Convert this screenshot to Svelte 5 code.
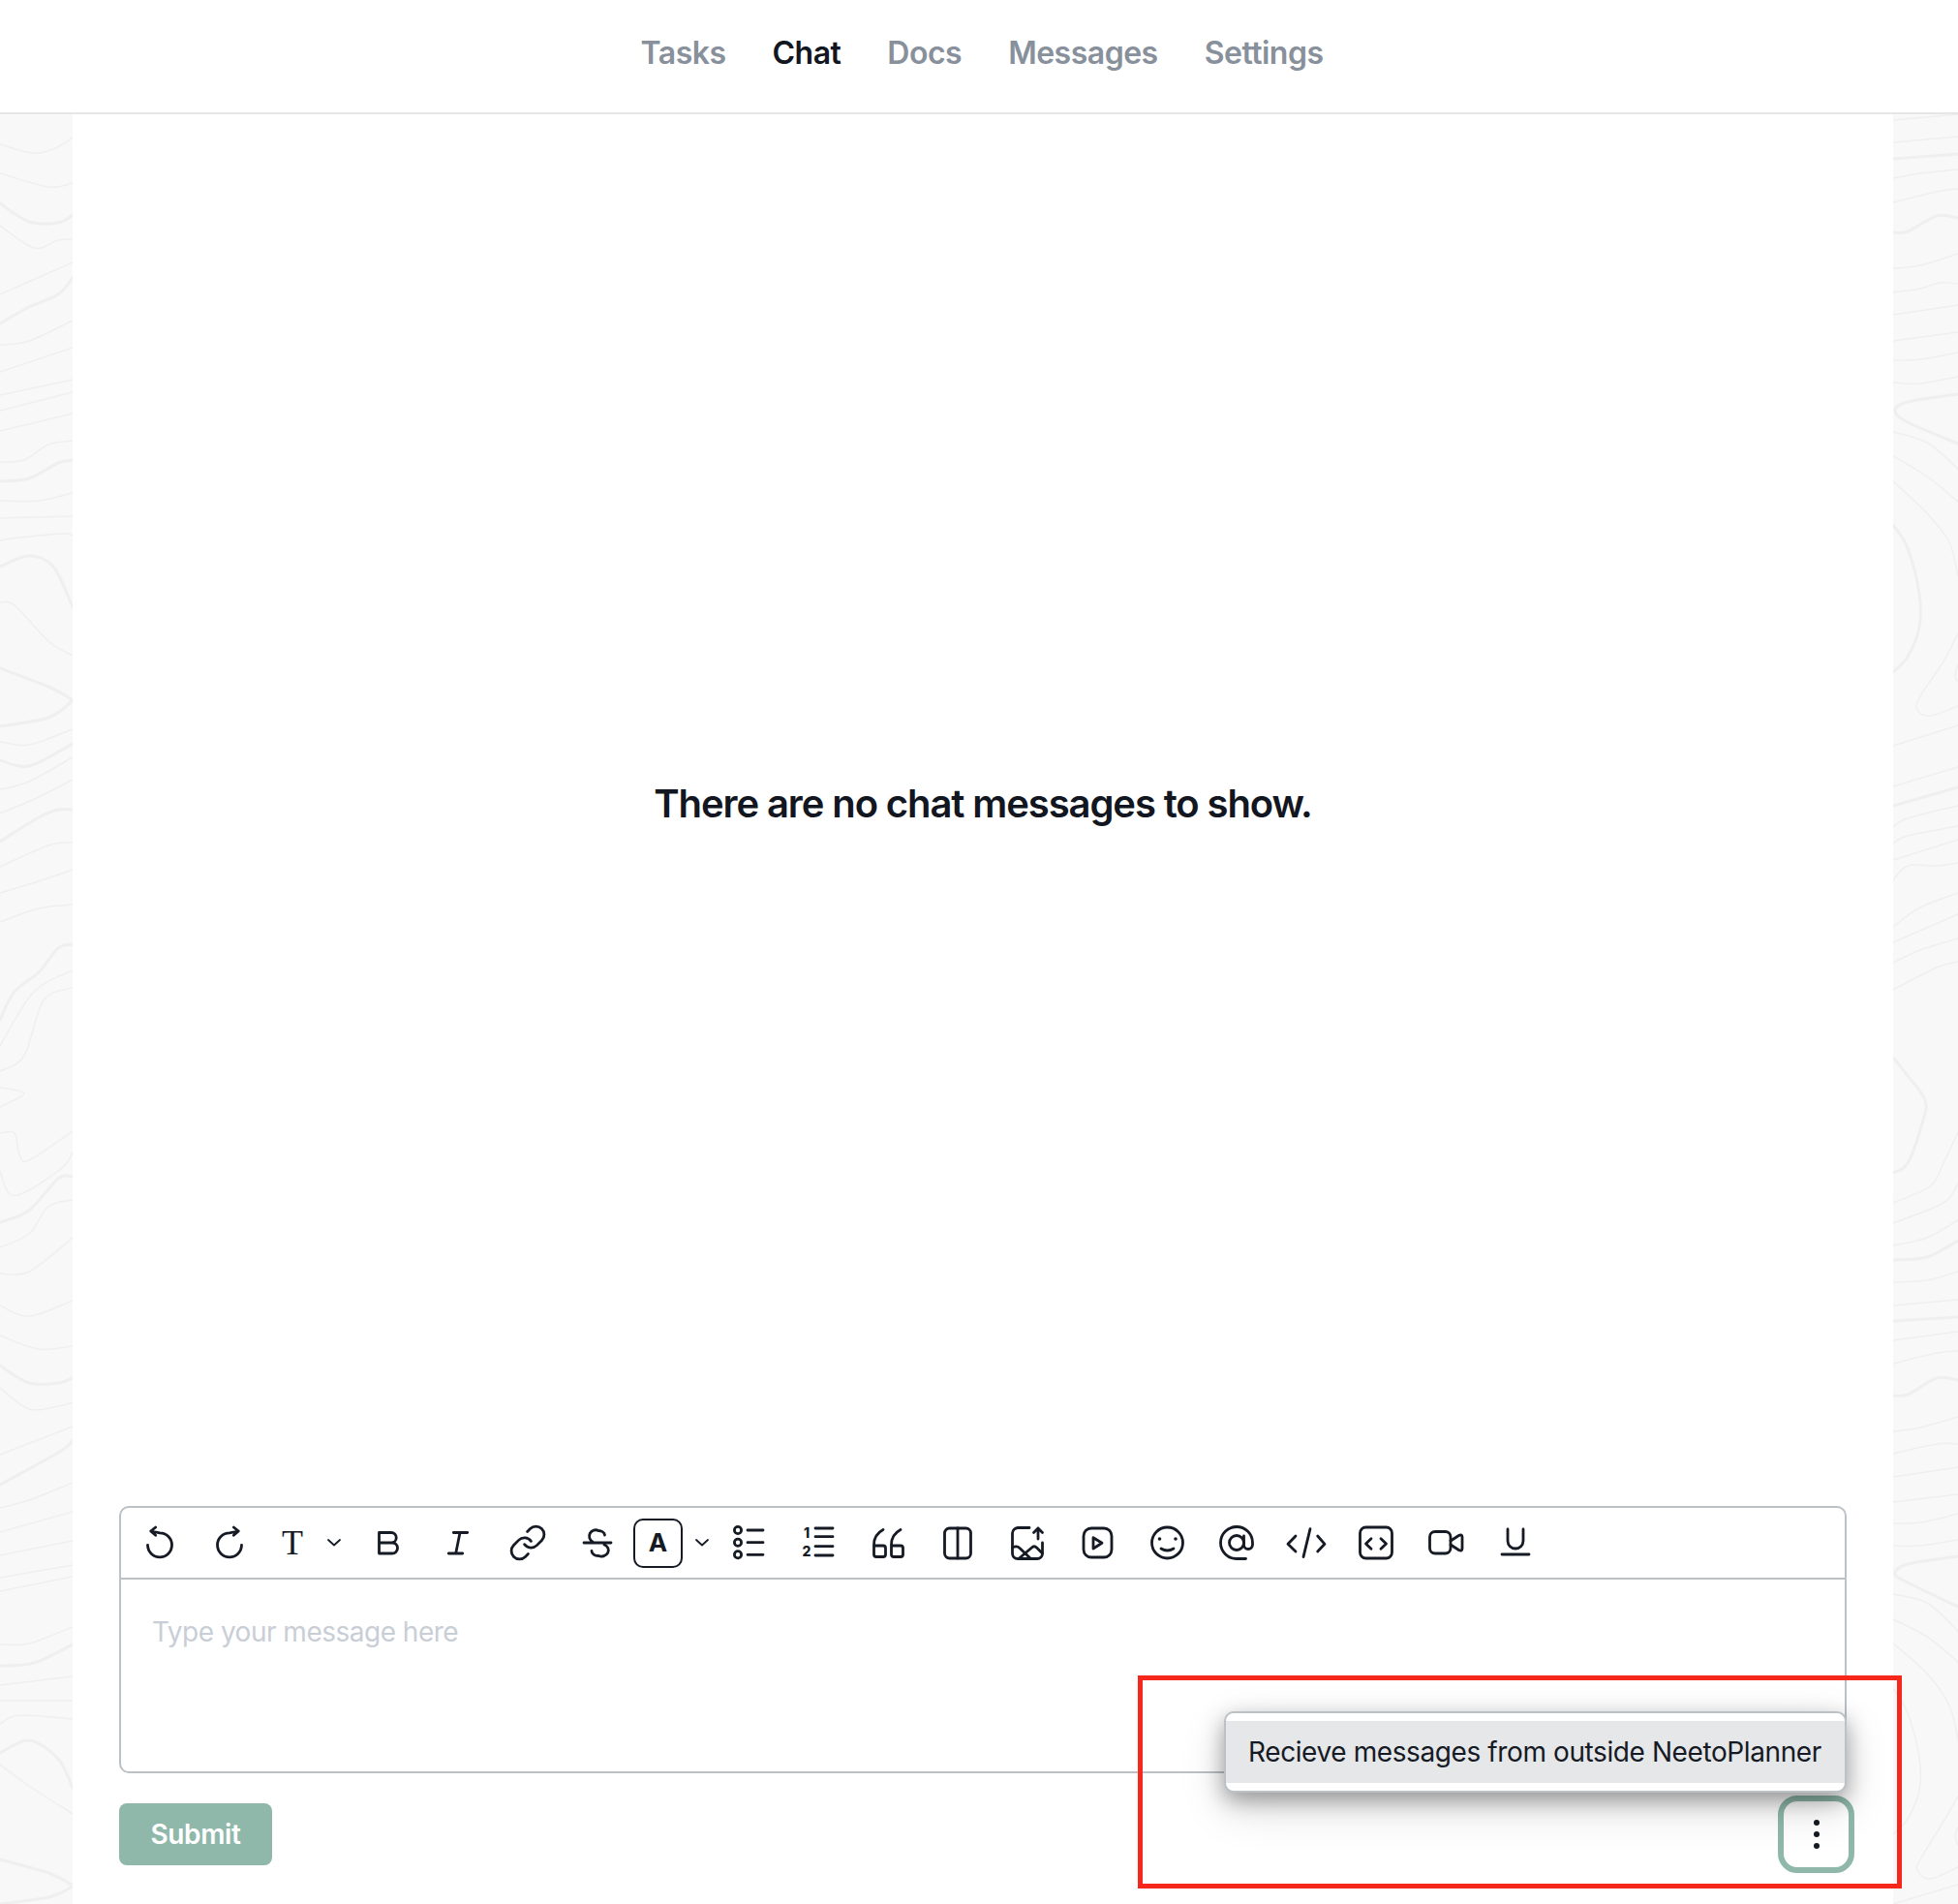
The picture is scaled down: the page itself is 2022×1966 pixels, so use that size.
<script lang="ts">
  const tabs = ['Tasks', 'Chat', 'Docs', 'Messages', 'Settings'];

  // contour lines of the page background, [points, thick]
  const leftLines: [string, boolean?][] = [
    ['0,149 33,158 55,154 75,142'], ['0,179 50,193 75,189'], ['0,210 30,229 60,230 75,222', true],
    ['0,233 35,256 60,248 75,247'], ['0,304 75,271'], ['0,334 30,317 60,304 75,287', true],
    ['0,356 30,352 75,331'], ['0,384 75,359'], ['0,408 75,392'], ['0,424 75,405'], ['0,445 75,427'],
    ['0,477 25,475 50,459 75,455'], ['0,497 30,494 60,478 75,475', true], ['0,517 40,517 75,509'],
    ['0,535 75,533'], ['0,558 20,555 65,551 75,553'], ['0,585 30,574 55,585 75,627', true],
    ['0,622 15,625 50,662 75,677'], ['0,690 50,709 72,721 73,725 50,741 0,750', true],
    ['0,766 30,769 75,753'], ['0,785 30,791 75,768', true], ['0,815 30,807 75,782'],
    ['0,840 40,823 75,805'], ['0,869 40,844 60,836 75,836', true], ['0,895 50,873 75,870'],
    ['0,922 40,910 75,898'], ['0,952 40,938 75,934'], ['0,1053 15,1024 40,1004 60,979 75,975', true],
    ['0,1080 35,1024 75,1002'], ['0,1106 25,1090 45,1033 75,1020'], ['0,1123 25,1129 0,1143'],
    ['0,1170 15,1170 20,1192 30,1198 75,1168'], ['0,1209 10,1233 30,1229 65,1205 75,1190'],
    ['0,1262 30,1250 60,1217 75,1215', true], ['0,1288 30,1274 50,1246 75,1239'],
    ['0,1315 30,1313 75,1278'], ['0,1348 30,1359 75,1343'], ['0,1379 40,1393 75,1390'],
    ['0,1410 30,1428 60,1428 75,1423', true], ['0,1433 30,1455 60,1452 75,1448'], ['0,1502 75,1473'],
    ['0,1533 60,1500 75,1488', true], ['0,1557 30,1549 75,1531'], ['0,1582 75,1561'], ['0,1606 75,1591'],
    ['0,1629 75,1616'], ['0,1643 75,1628'], ['0,1698 30,1697 75,1680'], ['0,1720 35,1717 75,1698', true],
    ['0,1740 75,1731'], ['0,1756 75,1756'], ['0,1780 20,1771 75,1775'],
    ['0,1810 30,1797 60,1816 75,1846', true], ['0,1822 30,1844 75,1873'],
    ['0,1920 50,1934 72,1945 73,1949 50,1959 0,1966', true]
  ];

  const rightLines: [string, boolean?][] = [
    ['0,124 67,118'], ['0,147 67,141'], ['0,164 67,159', true], ['0,184 28,179 67,175'],
    ['0,209 45,198 67,195'], ['0,240 15,239 45,223 67,225', true], ['0,277 28,274 67,262'],
    ['0,302 28,298 48,292 67,293'], ['0,325 67,315'], ['0,352 67,343'], ['0,372 28,371 67,364'],
    ['0,395 28,396 67,389'], ['67,407 15,415 2,424 15,436 67,458', true], ['0,446 35,457 67,484'],
    ['0,471 35,492 67,518'], ['0,497 35,530 58,560 67,595'], ['0,542 15,566 27,613 27,648 15,678 0,694', true],
    ['67,654 52,683 28,719 25,733 38,739 67,729'], ['67,686 64,698 67,704'], ['0,770 67,749'],
    ['0,812 67,792'], ['0,832 67,813', true], ['0,854 15,845 67,832'], ['0,871 15,863 67,853'],
    ['0,888 67,867'], ['0,909 15,894 45,894 67,891'], ['0,957 28,937 67,922'], ['0,973 67,944'],
    ['0,994 28,981 67,969'], ['0,1022 45,999 67,993'],
    ['0,1092 12,1107 33,1136 30,1160 15,1201 0,1211', true], ['67,1169 52,1201 38,1225 0,1242'],
    ['67,1222 52,1242 0,1263'], ['67,1260 35,1278 0,1286'], ['67,1281 35,1298 0,1301', true],
    ['67,1313 35,1322 0,1324'], ['0,1348 67,1342'], ['0,1364 67,1360', true], ['0,1384 67,1375'],
    ['0,1408 45,1397 67,1395'], ['0,1441 15,1440 45,1423 67,1425', true], ['0,1478 28,1474 67,1463'],
    ['0,1501 45,1491 67,1491'], ['0,1525 67,1515'], ['0,1551 67,1543'], ['0,1573 28,1572 67,1563'],
    ['0,1596 28,1596 67,1590'], ['67,1607 15,1615 2,1625 15,1634 67,1659', true],
    ['0,1646 35,1655 67,1684'], ['0,1672 35,1690 67,1716'], ['0,1697 35,1728 58,1761 67,1796'],
    ['0,1743 15,1769 27,1814 27,1849 15,1878 0,1894'], ['67,1855 52,1881 28,1920 25,1931 38,1940 67,1928'],
    ['67,1887 64,1896 67,1905'], ['0,1966 67,1946']
  ];

  // smooth line through the points
  function contour(points: string) {
    const p = points.split(' ').map((s) => s.split(',').map(Number));
    let d = `M${p[0][0]} ${p[0][1]}`;
    for (let i = 0; i < p.length - 1; i++) {
      const a = p[i - 1] ?? p[i];
      const b = p[i];
      const c = p[i + 1];
      const e = p[i + 2] ?? c;
      const c1 = [b[0] + (c[0] - a[0]) / 6, b[1] + (c[1] - a[1]) / 6];
      const c2 = [c[0] - (e[0] - b[0]) / 6, c[1] - (e[1] - b[1]) / 6];
      d += `C${c1[0]} ${c1[1]} ${c2[0]} ${c2[1]} ${c[0]} ${c[1]}`;
    }
    return d;
  }
</script>

{#snippet sideLines(lines: [string, boolean?][], width: number)}
  <svg class="side" style="width:{width}px" viewBox="0 118 {width} 1848" fill="none">
    {#each lines as [points, thick]}
      <path d={contour(points)} stroke-width={thick ? 3 : 1.5} />
    {/each}
  </svg>
{/snippet}

{#snippet caret()}
  <svg class="caret" width="14" height="8" viewBox="0 0 14 8" fill="none">
    <path d="M1 1l6 5.5L13 1" />
  </svg>
{/snippet}

<div class="root">
  <header class="topbar">
    <nav class="tabs">
      {#each tabs as tab}
        <span class="tab" class:active={tab === 'Chat'}>{tab}</span>
      {/each}
    </nav>
  </header>

  <div class="page">
    {@render sideLines(leftLines, 75)}

    <main class="main">
      <div class="empty">There are no chat messages to show.</div>

      <div class="composer">
        <div class="editor">
          <div class="toolbar">
            <button class="tb" title="Undo">
              <svg class="ic" viewBox="0 0 40 40"><path d="M15.7 4l-5 4 5 4.300M10.700 8L20 9.800A12.500 12.500 0 1 1 7.500 22.300" /></svg>
            </button>
            <button class="tb" title="Redo">
              <svg class="ic" viewBox="0 0 40 40"><path d="M24.300 4l5 4-5 4.300M29.300 8L20 9.800A12.500 12.500 0 1 0 32.500 22.300" /></svg>
            </button>
            <button class="tb group-t" title="Text size">
              <span class="serif-t">T</span>
              {@render caret()}
            </button>
            <button class="tb" title="Bold">
              <svg class="ic" viewBox="0 0 40 40"><path d="M11.500 9.500V31H25A5.500 5.500 0 0 0 25 20H11.500M11.500 9.500H24A5.250 5.250 0 0 1 24 20" /></svg>
            </button>
            <button class="tb" title="Italic">
              <svg class="ic" viewBox="0 0 40 40"><path d="M16.300 9.500H30.700M11.300 31H25.700M23 9.500L18.700 31" /></svg>
            </button>
            <button class="tb" title="Link">
              <svg class="ic" viewBox="0 0 40 40">
                <g transform="translate(0.600 -0.400) scale(1.700)" stroke-width="1.650">
                  <path d="M10 13a5 5 0 0 0 7.540.540l3-3a5 5 0 0 0-7.070-7.070l-1.720 1.710" />
                  <path d="M14 11a5 5 0 0 0-7.540-.540l-3 3a5 5 0 0 0 7.070 7.070l1.710-1.710" />
                </g>
              </svg>
            </button>
            <button class="tb" title="Strike">
              <svg class="ic" viewBox="0 0 40 40"><path d="M7 20H35M28.500 12A6.500 5 0 0 0 22 7.500A6 6 0 0 0 16 19M28 22A7 6 0 0 1 22 33.500A7 5 0 0 1 15 28.500" /></svg>
            </button>
            <div class="group-a">
              <button class="a-btn" title="Text color">A</button>
              {@render caret()}
            </div>
            <button class="tb" title="Bullet list">
              <svg class="ic" viewBox="0 0 40 40">
                <circle cx="9" cy="7" r="3.600" /><circle cx="9" cy="19.700" r="3.600" /><circle cx="9" cy="32.300" r="3.600" />
                <path d="M19 7H35M19 19.700H35M19 32.300H35" />
              </svg>
            </button>
            <button class="tb" title="Ordered list">
              <svg class="ic" viewBox="0 0 40 40">
                <text x="8" y="14.500" class="num">1</text><text x="8" y="34" class="num">2</text>
                <path d="M17 5H35M17 13.700H35M17 23.700H35M17 33H35" />
              </svg>
            </button>
            <button class="tb" title="Quote">
              <svg class="ic" viewBox="0 0 40 40">
                <path d="M15 6.500C8.500 10 5.500 15 5.500 22V32Q5.500 34.500 8 34.500H15Q17.500 34.500 17.500 32V25.500Q17.500 23 15 23H5.500" />
                <path d="M33 6.500C26.500 10 23.500 15 23.500 22V32Q23.500 34.500 26 34.500H33Q35.500 34.500 35.500 32V25.500Q35.500 23 33 23H23.500" />
              </svg>
            </button>
            <button class="tb" title="Columns">
              <svg class="ic" viewBox="0 0 40 40"><rect x="6.500" y="5" width="27" height="31" rx="5" /><path d="M20 5V36" /></svg>
            </button>
            <button class="tb" title="Image">
              <svg class="ic" viewBox="0 0 40 40">
                <path d="M22 4.500H10A6 6 0 0 0 4.500 10V31A5.500 5.500 0 0 0 10 36.500H30A5.500 5.500 0 0 0 35.500 31V20" />
                <path d="M31 16V5M26.500 9.500L31 5L35.500 9.500" />
                <path d="M4.500 25Q9 22.500 12 25.500L23 36M11 36.500L24.500 25Q27 22.500 29.500 25L35.500 31" />
              </svg>
            </button>
            <button class="tb" title="Video">
              <svg class="ic" viewBox="0 0 40 40"><rect x="6" y="5" width="29" height="30" rx="8" /><path d="M16 14.700L25 20.300L16 26Z" /></svg>
            </button>
            <button class="tb" title="Emoji">
              <svg class="ic" viewBox="0 0 40 40">
                <circle cx="20.500" cy="20" r="16" />
                <circle class="solid" cx="12.500" cy="16" r="1.800" /><circle class="solid" cx="29" cy="16" r="1.800" />
                <path d="M14 26Q20.500 30 27 26" />
              </svg>
            </button>
            <button class="tb" title="Mention">
              <svg class="ic" viewBox="0 0 40 40"><circle cx="20" cy="20" r="7.500" /><path d="M29.500 36.500H20A16.500 16.500 0 1 1 36.500 20V22A4.500 4.500 0 0 1 27.500 22V13" /></svg>
            </button>
            <button class="tb" title="Inline code">
              <svg class="ic" viewBox="0 0 40 40"><path d="M9 13L1 21.300L9 29M31.700 13L39 21.300L31.700 29M24 5.700L17 34.700" /></svg>
            </button>
            <button class="tb" title="Code block">
              <svg class="ic" viewBox="0 0 40 40"><rect x="3.500" y="4" width="33" height="32" rx="6" /><path d="M15 15.700L9.500 21L15 26.300M25 15.700L30.500 21L25 26.300" /></svg>
            </button>
            <button class="tb" title="Record">
              <svg class="ic" viewBox="0 0 40 40">
                <rect x="3.500" y="8.500" width="21.500" height="22.500" rx="5.500" />
                <path d="M25 18L33.500 12.500Q37 11 37 14V26Q37 29 33.500 27.500L25 22" />
              </svg>
            </button>
            <button class="tb" title="Underline">
              <svg class="ic" viewBox="0 0 40 40"><path d="M12 6V18A8 8 0 0 0 28 18V6M6 32H34" /></svg>
            </button>
          </div>
          <div class="body">Type your message here</div>
        </div>

        <div class="actions">
          <button class="submit">Submit</button>
          <button class="more" title="More">
            <svg width="8" height="32" viewBox="0 0 8 32"><circle cx="4" cy="4" r="3" /><circle cx="4" cy="16" r="3" /><circle cx="4" cy="28" r="3" /></svg>
          </button>
        </div>

        <div class="menu">
          <div class="menu-item">Recieve messages from outside NeetoPlanner</div>
        </div>
      </div>
    </main>

    {@render sideLines(rightLines, 67)}
  </div>

  <div class="annotation"></div>
</div>

<style>
  :global(body) {
    margin: 0;
    background: #fff;
  }

  .root {
    position: relative;
    width: 2022px;
    height: 1966px;
    display: flex;
    flex-direction: column;
    overflow: hidden;
    font-family: Inter, "Liberation Sans", sans-serif;
    color: #151a24;
  }

  .topbar {
    height: 116px;
    flex-shrink: 0;
    background: #fff;
    border-bottom: 2px solid #e5e6e8;
    padding-left: 6px;
    display: flex;
    justify-content: center;
  }

  .tabs {
    display: flex;
    gap: 48px;
    padding-top: 36px;
    font-size: 32px;
    line-height: 38px;
    font-weight: 600;
    letter-spacing: -0.5px;
  }

  .tab {
    color: #87909b;
  }

  .tab.active {
    color: #121620;
  }

  .page {
    flex: 1;
    display: flex;
    min-height: 0;
    background: #f8f8f8;
  }

  .side {
    display: block;
    height: 1848px;
    flex-shrink: 0;
  }

  .side path {
    stroke: #efefef;
    stroke-linecap: round;
  }

  .main {
    flex: 1;
    min-width: 0;
    background: #fff;
    display: flex;
    flex-direction: column;
    padding: 0 48px 32px 48px;
  }

  .empty {
    flex: 1;
    display: flex;
    align-items: center;
    justify-content: center;
    padding-bottom: 14px;
    font-size: 40px;
    font-weight: 600;
    letter-spacing: -1.1px;
    color: #121620;
  }

  .composer {
    position: relative;
  }

  .editor {
    border: 2px solid #bcc1c6;
    border-radius: 10px;
    height: 276px;
    box-sizing: border-box;
    display: flex;
    flex-direction: column;
  }

  .toolbar {
    height: 72px;
    flex-shrink: 0;
    box-sizing: content-box;
    border-bottom: 2px solid #bcc1c6;
    padding-left: 4px;
    display: flex;
    align-items: center;
  }

  button {
    font-family: inherit;
    background: none;
    border: none;
    padding: 0;
    color: inherit;
  }

  .tb {
    width: 72px;
    height: 72px;
    flex-shrink: 0;
    display: flex;
    align-items: center;
    justify-content: center;
  }

  .ic {
    width: 40px;
    height: 40px;
    overflow: visible;
    fill: none;
    stroke: #151a24;
    stroke-width: 2.8;
    stroke-linecap: round;
    stroke-linejoin: round;
  }

  .ic .solid {
    fill: #151a24;
    stroke: none;
  }

  .ic .num {
    fill: #151a24;
    stroke: none;
    font-size: 14px;
    font-weight: 800;
    text-anchor: middle;
  }

  .caret {
    flex-shrink: 0;
  }

  .caret path {
    stroke: #151a24;
    stroke-width: 1.8;
    stroke-linecap: round;
    stroke-linejoin: round;
  }

  .group-t {
    width: 91px;
    justify-content: flex-start;
  }

  .serif-t {
    width: 58px;
    text-align: center;
    font-family: "Liberation Serif", serif;
    font-size: 36px;
    line-height: 40px;
    color: #151a24;
  }

  .group-t .caret {
    margin-left: 7px;
  }

  .group-a {
    width: 85px;
    flex-shrink: 0;
    display: flex;
    align-items: center;
  }

  .a-btn {
    width: 51px;
    height: 51px;
    box-sizing: border-box;
    margin-left: 2px;
    border: 2.5px solid #151a24;
    border-radius: 10px;
    font-size: 26px;
    font-weight: 700;
    line-height: 1;
    color: #151a24;
  }

  .group-a .caret {
    margin-left: 13px;
  }

  .body {
    flex: 1;
    padding: 37px 32px 0;
    font-size: 28px;
    line-height: 34px;
    letter-spacing: -0.5px;
    color: #c9ced6;
  }

  .actions {
    margin-top: 23px;
    display: flex;
    align-items: center;
    justify-content: space-between;
  }

  .submit {
    width: 158px;
    height: 64px;
    border-radius: 8px;
    background: #8fb8ab;
    color: #fff;
    font-size: 28px;
    font-weight: 600;
    letter-spacing: -0.4px;
  }

  .more {
    width: 79px;
    height: 80px;
    box-sizing: border-box;
    margin-right: -8px;
    border: 6px solid #8fb8ab;
    border-radius: 20px;
    display: flex;
    align-items: center;
    justify-content: center;
  }

  .more circle {
    fill: #151a24;
  }

  .menu {
    position: absolute;
    top: 212px;
    right: 0;
    width: 643px;
    height: 84px;
    box-sizing: border-box;
    padding: 8px 0;
    background: #fff;
    border: 2px solid #bcc1c6;
    border-radius: 10px;
    box-shadow: 0 8px 22px rgba(0, 0, 0, 0.34), 0 16px 48px rgba(0, 0, 0, 0.14);
  }

  .menu-item {
    height: 64px;
    box-sizing: border-box;
    padding-left: 23px;
    background: #e6e7e9;
    font-size: 28px;
    line-height: 64px;
    letter-spacing: -0.4px;
    white-space: nowrap;
    color: #151a24;
  }

  .annotation {
    position: absolute;
    left: 1175px;
    top: 1730px;
    width: 789px;
    height: 220px;
    box-sizing: border-box;
    border: 5px solid #f6281c;
    pointer-events: none;
  }
</style>
